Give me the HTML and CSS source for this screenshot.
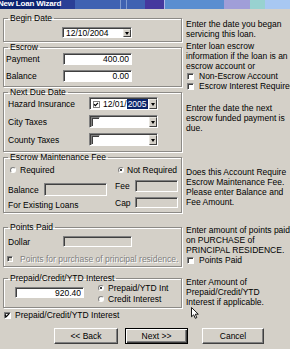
FILE: index.html
```html
<!DOCTYPE html>
<html lang="en">

<head>
  <meta charset="UTF-8">
  <meta name="viewport" content="width=device-width, initial-scale=1.0">
  <title>New Loan Wizard</title>
  <link rel="stylesheet" href="styles.css">
</head>

<body>
  <div class="titlebar">New Loan Wizard</div>

  <div class="main">
    <div class="left">
      <fieldset class="group g-begin">
        <legend>Begin Date</legend>
        <div class="combo combo-begin"><span class="combo-text">12/10/2004</span><span class="drop"></span></div>
      </fieldset>

      <fieldset class="group g-escrow">
        <legend>Escrow</legend>
        <div class="row row-pay"><span class="lbl lbl-escrow">Payment</span><input class="field num" value="400.00"></div>
        <div class="row row-bal"><span class="lbl lbl-escrow">Balance</span><input class="field num" value="0.00"></div>
      </fieldset>

      <fieldset class="group g-due">
        <legend>Next Due Date</legend>
        <div class="row row-due">
          <span class="lbl lbl-due">Hazard Insurance</span>
          <div class="combo combo-due">
            <span class="check check-in on"><svg viewBox="0 0 7 7" width="7" height="7"><path d="M1.2 3.2 L2.8 4.8 L5.8 1.6" fill="none" stroke="#000" stroke-width="1.4"/></svg></span>
            <span class="combo-text">12/01/<span class="sel">2005</span></span>
            <span class="drop"></span>
          </div>
        </div>
        <div class="row row-due">
          <span class="lbl lbl-due">City Taxes</span>
          <div class="combo combo-due"><span class="check check-big"></span><span class="drop"></span></div>
        </div>
        <div class="row row-due">
          <span class="lbl lbl-due">County Taxes</span>
          <div class="combo combo-due"><span class="check check-big"></span><span class="drop"></span></div>
        </div>
      </fieldset>

      <fieldset class="group g-fee">
        <legend>Escrow Maintenance Fee</legend>
        <div class="radios">
          <span class="opt opt-req"><span class="radio"></span>Required</span>
          <span class="opt"><span class="radio on"></span>Not Required</span>
        </div>
        <div class="fee-grid">
          <div class="fee-left">
            <div class="row row-feebal"><span class="lbl lbl-feebal">Balance</span><span class="field off field-feebal"></span></div>
            <div class="existing">For Existing Loans</div>
          </div>
          <div class="fee-right">
            <div class="row row-fee"><span class="lbl lbl-fee">Fee</span><span class="field off field-fee"></span></div>
            <div class="row row-cap"><span class="lbl lbl-fee">Cap</span><span class="field off field-fee"></span></div>
          </div>
        </div>
      </fieldset>

      <fieldset class="group g-points">
        <legend>Points Paid</legend>
        <div class="row row-dollar"><span class="lbl lbl-dollar">Dollar</span><span class="field off field-dollar"></span></div>
        <div class="row row-purchase"><span class="check check-off"></span><span class="disabled-text">Points for purchase of principal residence.</span></div>
      </fieldset>

      <fieldset class="group g-prepaid">
        <legend>Prepaid/Credit/YTD Interest</legend>
        <div class="prepaid">
          <input class="field num field-prepaid" value="920.40">
          <div class="prepaid-opts">
            <div class="opt-line"><span class="radio on"></span>Prepaid/YTD Int</div>
            <div class="opt-line"><span class="radio"></span>Credit Interest</div>
          </div>
        </div>
      </fieldset>

      <div class="row row-check">
        <span class="check on"><svg viewBox="0 0 7 7" width="7" height="7"><path d="M1.2 3.2 L2.8 4.8 L5.8 1.6" fill="none" stroke="#000" stroke-width="1.4"/></svg></span>
        Prepaid/Credit/YTD Interest
      </div>
    </div>

    <div class="right">
      <div class="note n1">Enter the date you began<br>servicing this loan.</div>
      <div class="note n2">
        Enter loan escrow<br>information if the loan is an<br>escrow account or
        <div class="note-check"><span class="check"></span>Non-Escrow Account</div>
        <div class="note-check"><span class="check"></span>Escrow Interest Required</div>
      </div>
      <div class="note n3">Enter the date the next<br>escrow funded payment is<br>due.</div>
      <div class="note n4">Does this Account Require<br>Escrow Maintenance Fee.<br>Please enter Balance and<br>Fee Amount.</div>
      <div class="note n5">
        Enter amount of points paid<br>on PURCHASE of<br>PRINCIPAL RESIDENCE.
        <div class="note-check"><span class="check"></span>Points Paid</div>
      </div>
      <div class="note n6">Enter Amount of<br>Prepaid/Credit/YTD<br>Interest if applicable.</div>
    </div>
  </div>

  <div class="buttons">
    <button class="btn btn-back">&lt;&lt; Back</button>
    <button class="btn btn-next">Next &gt;&gt;</button>
    <button class="btn btn-cancel">Cancel</button>
  </div>

  <svg class="cursor" viewBox="0 0 8 12" width="8" height="12">
    <path d="M0.5 0.5 L0.5 9.8 L2.7 7.8 L4.3 11.3 L5.8 10.6 L4.3 7.2 L7.3 7.2 Z" fill="#fff" stroke="#000" stroke-width="0.9"/>
  </svg>
</body>

</html>
```

FILE: styles.css
```css
* {
  box-sizing: border-box;
}

body {
  margin: 0;
  height: 349px;
  overflow: hidden;
  position: relative;
  background: #d4d0c8;
  color: #000;
  font-family: "Liberation Sans", Arial, sans-serif;
  font-size: 8.5px;
  line-height: 10px;
}

.titlebar {
  height: 9px;
  overflow: hidden;
  white-space: nowrap;
  color: #fff;
  font-weight: bold;
  font-size: 8px;
  line-height: 7px;
  text-indent: -2px;
  letter-spacing: -0.2px;
  background: linear-gradient(to right,
      #0c2472 0, #0c2472 60px,
      #2a3f96 60px, #2a3f96 75px,
      #3f62b2 75px, #3f62b2 120px,
      #7f9ad0 120px, #7f9ad0 121px,
      #3f62b2 121px, #3f62b2 126px,
      #7f9ad0 126px, #7f9ad0 127px,
      #3f62b2 127px, #3f62b2 145px,
      #45389e 145px, #45389e 164px,
      #b0b8e8 164px, #b0b8e8 165px,
      #5a8ed0 165px, #5a8ed0 224px,
      #a09ed8 224px, #a09ed8 250px,
      #98d2d0 250px, #98d2d0 265px,
      #a8c8f2 265px);
}

.main {
  display: flex;
  align-items: flex-start;
}

.left {
  width: 179px;
  margin-left: 3px;
  margin-top: 4px;
  flex: none;
}

.right {
  margin-left: 4px;
  white-space: nowrap;
}

/* group boxes */

.group {
  margin: 0;
  padding: 0 0 0 1px;
  min-width: 0;
  border: 1px solid #8c8a86;
  box-shadow: inset 1px 1px 0 #fff, 1px 1px 0 #fff;
}

.group legend {
  margin-left: 3px;
  padding: 0 2px;
  line-height: 10px;
  height: 10px;
}

.g-begin {
  padding-top: 4px;
  padding-bottom: 3px;
}

.g-escrow {
  padding-top: 1px;
  padding-bottom: 4px;
}

.g-due {
  padding-bottom: 5px;
}

.g-fee {
  padding-top: 2px;
  padding-bottom: 2px;
}

.g-points {
  margin-top: 9px;
  padding-top: 4px;
  padding-bottom: 2px;
}

.g-prepaid {
  margin-top: 6px;
  padding-bottom: 3px;
}

.row {
  display: flex;
  align-items: center;
}

.lbl {
  flex: none;
}

/* fields */

.field {
  display: block;
  flex: none;
  margin: 0;
  padding: 0 2px;
  font: inherit;
  color: #000;
  background: #fff;
  border: 1px solid;
  border-color: #808080 #fff #fff #808080;
  box-shadow: inset 1px 1px 0 #404040;
  outline: none;
}

.field.num {
  text-align: right;
}

.field.off {
  background: #d4d0c8;
}

.combo {
  display: flex;
  align-items: center;
  background: #fff;
  border: 1px solid;
  border-color: #808080 #fff #fff #808080;
  box-shadow: inset 1px 1px 0 #404040;
  padding: 1px 0 0 1px;
}

.combo-text {
  white-space: nowrap;
}

.sel {
  background: #0a246a;
  color: #fff;
  padding: 0 1px;
}

.drop {
  align-self: stretch;
  width: 8px;
  margin-left: auto;
  display: flex;
  align-items: center;
  justify-content: center;
  background: #d4d0c8;
  border: 1px solid;
  border-color: #e8e6e0 #404040 #404040 #e8e6e0;
}

.drop::after {
  content: "";
  width: 0;
  height: 0;
  border-left: 2.5px solid transparent;
  border-right: 2.5px solid transparent;
  border-top: 3px solid #000;
}

.combo-begin {
  width: 70px;
  height: 11px;
  margin-left: 57px;
}

.combo-begin .combo-text {
  padding-left: 2px;
}

.row-pay,
.row-bal {
  height: 12px;
}

.row-bal {
  margin-top: 5px;
}

.lbl-escrow {
  width: 57px;
  margin-left: 1px;
}

.row-pay .field,
.row-bal .field {
  width: 69px;
  height: 12px;
}

.row-due {
  height: 13px;
}

.row-due + .row-due {
  margin-top: 5px;
}

.lbl-due {
  width: 81px;
  margin-left: 3px;
}

.combo-due {
  width: 69px;
  height: 13px;
}

.combo-due .combo-text {
  margin-left: 3px;
}

/* checks and radios */

.check {
  display: inline-flex;
  flex: none;
  width: 7px;
  height: 7px;
  background: #fff;
  border: 1px solid;
  border-color: #808080 #fff #fff #808080;
  box-shadow: inset 1px 1px 0 #404040;
  vertical-align: middle;
}

.check svg {
  display: block;
  margin: -1px 0 0 -1px;
}

.check-in {
  margin-left: 2px;
  box-shadow: none;
  border-color: #808080;
}

.check-big {
  width: 9px;
  height: 10px;
  margin-left: 0;
}

.check-off {
  width: 6px;
  height: 6px;
  margin-left: 2px;
  background: #d4d0c8;
}

.radio {
  display: inline-block;
  flex: none;
  width: 6px;
  height: 6px;
  border-radius: 50%;
  background: #fff;
  border: 1px solid;
  border-color: #808080 #fff #fff #808080;
  position: relative;
  vertical-align: middle;
}

.radio.on::after {
  content: "";
  position: absolute;
  left: 1px;
  top: 1px;
  width: 2px;
  height: 2px;
  border-radius: 50%;
  background: #000;
}

.radios {
  display: flex;
  align-items: center;
  height: 11px;
}

.opt {
  display: flex;
  align-items: center;
  gap: 4px;
}

.opt-req {
  width: 108px;
  margin-left: 5px;
}

.opt-req + .opt {
  gap: 3px;
}

.fee-grid {
  display: flex;
  margin-top: 5px;
}

.fee-left {
  width: 110px;
  flex: none;
}

.row-feebal {
  margin-top: 3px;
  height: 13px;
}

.lbl-feebal {
  width: 36px;
  margin-left: 3px;
}

.field-feebal {
  width: 63px;
  height: 13px;
}

.existing {
  margin-top: 4px;
  margin-left: 3px;
}

.lbl-fee {
  width: 20px;
}

.field-fee {
  width: 43px;
  height: 100%;
}

.row-fee {
  height: 12px;
}

.row-cap {
  height: 11px;
  margin-top: 5px;
}

.row-dollar {
  height: 11px;
}

.lbl-dollar {
  width: 55px;
  margin-left: 3px;
}

.field-dollar {
  width: 69px;
  height: 11px;
}

.row-purchase {
  height: 11px;
  margin-top: 6px;
  gap: 7px;
}

.disabled-text {
  color: #808080;
  text-shadow: 1px 1px 0 #fff;
  white-space: nowrap;
}

.prepaid {
  display: flex;
  align-items: flex-start;
}

.field-prepaid {
  width: 69px;
  height: 11px;
  margin: 4px 0 0 10px;
}

.prepaid-opts {
  margin-left: 14px;
}

.opt-line {
  display: flex;
  align-items: center;
  gap: 4px;
  height: 10.5px;
  white-space: nowrap;
}

.row-check {
  height: 10px;
  margin-top: 2px;
  margin-left: 1px;
  gap: 4px;
  white-space: nowrap;
}

/* instructions column */

.n1 {
  margin-top: 10px;
}

.n2 {
  margin-top: 2px;
}

.n3 {
  margin-top: 12px;
}

.n4 {
  margin-top: 34px;
}

.n5 {
  margin-top: 18px;
}

.n6 {
  margin-top: 12px;
}

.note-check {
  display: flex;
  align-items: center;
  gap: 5px;
  height: 10px;
  margin-left: 1px;
}

/* buttons */

.buttons {
  display: flex;
  margin-top: 8px;
}

.btn {
  height: 16px;
  padding: 0;
  font: inherit;
  color: #000;
  background: #d4d0c8;
  border: 1px solid;
  border-color: #fff #404040 #404040 #fff;
  box-shadow: inset -1px -1px 0 #808080;
}

.btn:focus {
  outline: none;
}

.btn-back {
  width: 64px;
  margin-left: 54px;
}

.btn-next {
  width: 63px;
  margin-left: 7px;
  border-color: #000;
  box-shadow: inset 1px 1px 0 #fff, inset -1px -1px 0 #404040, inset -2px -2px 0 #808080;
}

.btn-cancel {
  width: 62px;
  margin-left: 14px;
}

.cursor {
  position: absolute;
  left: 191px;
  top: 307px;
}
```
